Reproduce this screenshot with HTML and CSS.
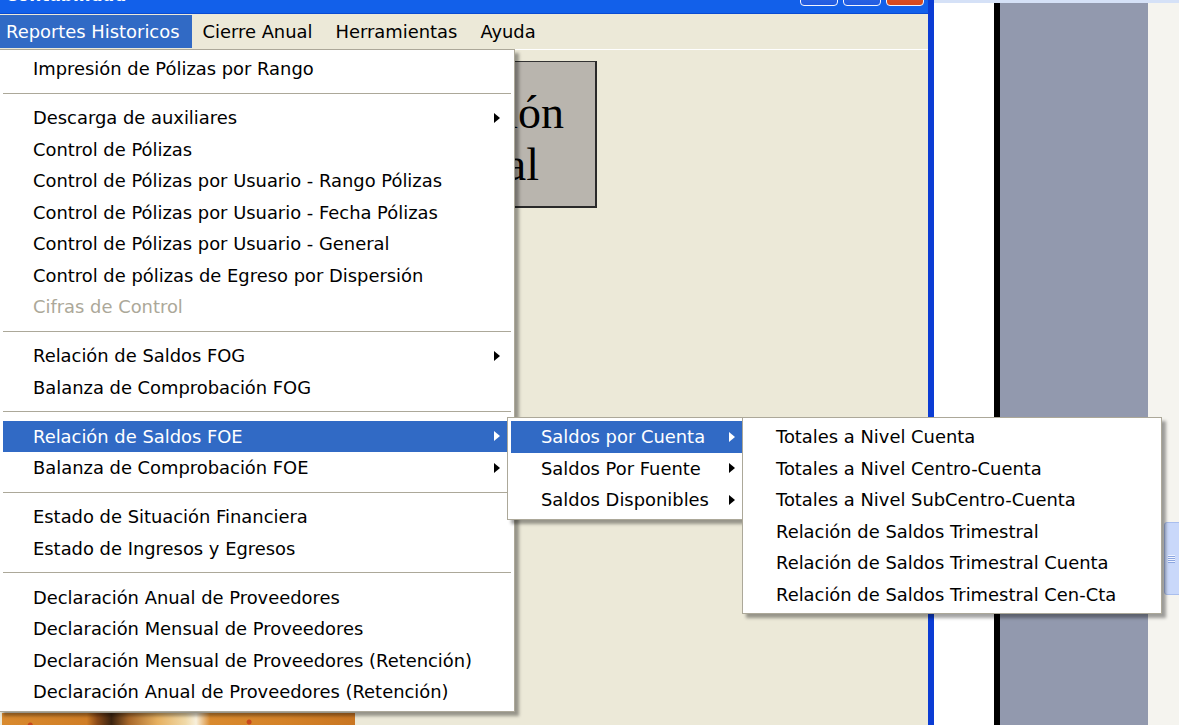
FILE: index.html
```html
<!DOCTYPE html>
<html lang="es">
<head>
<meta charset="utf-8">
<title>Contabilidad</title>
<link rel="stylesheet" href="styles.css">
</head>
<body>
<div class="desktop">
  <div class="window">
    <div class="titlebar">
      <span class="title">Contabilidad</span>
      <div class="caption-buttons">
        <span class="cap-btn"></span>
        <span class="cap-btn"></span>
        <span class="cap-btn close"></span>
      </div>
    </div>
    <div class="menubar">
      <span class="menubar-item active">Reportes Historicos</span>
      <span class="menubar-item">Cierre Anual</span>
      <span class="menubar-item">Herramientas</span>
      <span class="menubar-item">Ayuda</span>
    </div>
    <div class="client">
      <div class="banner">
        <span class="banner-line">Operación</span>
        <span class="banner-line short">Anual</span>
      </div>
      <div class="photo"></div>
    </div>
  </div>
  <div class="backdrop">
    <div class="backdrop-top"></div>
    <div class="backdrop-body">
      <div class="pane-white"></div>
      <div class="pane-rule"></div>
      <div class="pane-gray"></div>
      <div class="scroll-track">
        <div class="scroll-thumb"><span class="grip"></span></div>
      </div>
    </div>
  </div>
</div>

<!-- Reportes Historicos drop-down -->
<div class="popup main-menu">
  <div class="mi">Impresión de Pólizas por Rango</div>
  <div class="sep"></div>
  <div class="mi">Descarga de auxiliares<span class="arrow"></span></div>
  <div class="mi">Control de Pólizas</div>
  <div class="mi">Control de Pólizas por Usuario - Rango Pólizas</div>
  <div class="mi">Control de Pólizas por Usuario - Fecha Pólizas</div>
  <div class="mi">Control de Pólizas por Usuario - General</div>
  <div class="mi">Control de pólizas de Egreso por Dispersión</div>
  <div class="mi disabled">Cifras de Control</div>
  <div class="sep"></div>
  <div class="mi">Relación de Saldos FOG<span class="arrow"></span></div>
  <div class="mi">Balanza de Comprobación FOG</div>
  <div class="sep"></div>
  <div class="mi hot">Relación de Saldos FOE<span class="arrow"></span></div>
  <div class="mi">Balanza de Comprobación FOE<span class="arrow"></span></div>
  <div class="sep"></div>
  <div class="mi">Estado de Situación Financiera</div>
  <div class="mi">Estado de Ingresos y Egresos</div>
  <div class="sep"></div>
  <div class="mi">Declaración Anual de Proveedores</div>
  <div class="mi">Declaración Mensual de Proveedores</div>
  <div class="mi">Declaración Mensual de Proveedores (Retención)</div>
  <div class="mi">Declaración Anual de Proveedores (Retención)</div>
</div>

<!-- Relación de Saldos FOE submenu -->
<div class="popup sub-saldos">
  <div class="mi hot">Saldos por Cuenta<span class="arrow"></span></div>
  <div class="mi">Saldos Por Fuente<span class="arrow"></span></div>
  <div class="mi">Saldos Disponibles<span class="arrow"></span></div>
</div>

<!-- Saldos por Cuenta submenu -->
<div class="popup sub-totales">
  <div class="mi">Totales a Nivel Cuenta</div>
  <div class="mi">Totales a Nivel Centro-Cuenta</div>
  <div class="mi">Totales a Nivel SubCentro-Cuenta</div>
  <div class="mi">Relación de Saldos Trimestral</div>
  <div class="mi">Relación de Saldos Trimestral Cuenta</div>
  <div class="mi">Relación de Saldos Trimestral Cen-Cta</div>
</div>
</body>
</html>
```

FILE: styles.css
```css
* {
  box-sizing: border-box;
}

body {
  margin: 0;
  width: 1179px;
  height: 725px;
  overflow: hidden;
  position: relative;
  background: #ECE9D8;
  font-family: "DejaVu Sans", Verdana, sans-serif;
  font-size: 17.9px;
  color: #000;
}

.desktop {
  display: flex;
  height: 725px;
}

/* ---------- main application window ---------- */
.window {
  width: 934px;
  flex: none;
  display: flex;
  flex-direction: column;
  background: #ECE9D8;
  border-right: 6px solid #0B3CD4;
}

.titlebar {
  height: 14px;
  flex: none;
  display: flex;
  align-items: flex-end;
  overflow: hidden;
  background: #1260EA;
  border-bottom: 1px solid #0A4BD2;
}

.title {
  flex: none;
  margin: 0 0 8px 5px;
  color: #fff;
  font-weight: bold;
  font-size: 17px;
  line-height: 20px;
}

.caption-buttons {
  flex: none;
  display: flex;
  gap: 5px;
  margin: 0 4px 7px auto;
}

.cap-btn {
  width: 38px;
  height: 38px;
  flex: none;
  border: 1px solid #F2F5FF;
  border-radius: 4px;
  background: linear-gradient(#4A86F6, #215BE0);
}

.cap-btn.close {
  background: linear-gradient(#EC7248, #D6471C);
}

.menubar {
  height: 36px;
  flex: none;
  display: flex;
  gap: 4px;
  padding: 1px 0;
  border-bottom: 1px solid #fff;
  background: #ECE9D8;
}

.menubar-item {
  padding: 0 13px 0 6px;
  line-height: 33px;
  white-space: nowrap;
}

.menubar-item.active {
  background: #316AC5;
  color: #fff;
}

.client {
  flex: 1;
  overflow: hidden;
}

/* large caption panel next to the menu */
.banner {
  width: 140px;
  height: 147px;
  margin: 11px 0 0 457px;
  padding: 24.5px 31px 0 0;
  display: flex;
  flex-direction: column;
  align-items: flex-end;
  overflow: hidden;
  background: #B9B5AE;
  border-top: 1px solid #333;
  border-right: 2px solid #2A2A2A;
  border-bottom: 2px solid #2A2A2A;
  font-family: "Liberation Serif", "Times New Roman", serif;
  font-size: 46px;
  line-height: 52px;
  white-space: nowrap;
}

.banner-line.short {
  margin-right: 25px;
}

.photo {
  width: 353px;
  height: 30px;
  margin: 505px 0 0 2px;
  background:
    radial-gradient(circle at 8% 40%, rgba(190, 30, 20, .6) 0 2px, transparent 3px),
    radial-gradient(circle at 22% 70%, rgba(190, 30, 20, .6) 0 2px, transparent 3px),
    radial-gradient(circle at 70% 30%, rgba(190, 30, 20, .6) 0 2px, transparent 3px),
    radial-gradient(circle at 86% 60%, rgba(190, 30, 20, .6) 0 2px, transparent 3px),
    linear-gradient(90deg,
      #D98A2E 0, #D07E26 24%, #8A4A18 27%, #3C2410 31%, #A8682A 36%,
      #E6B060 44%, #F0D9A8 52%, #F8F0DC 55%, #D98A2E 59%, #D48228 80%, #C97622 100%);
}

/* ---------- window behind, on the right ---------- */
.backdrop {
  flex: 1;
  display: flex;
  flex-direction: column;
}

.backdrop-top {
  height: 3px;
  flex: none;
  background: #D5E1F7;
}

.backdrop-body {
  flex: 1;
  display: flex;
}

.pane-white {
  width: 60px;
  flex: none;
  background: #fff;
}

.pane-rule {
  width: 6px;
  flex: none;
  background: #000;
}

.pane-gray {
  width: 148px;
  flex: none;
  background: #9299AE;
}

.scroll-track {
  flex: 1;
  background: #F5F4EF;
}

.scroll-thumb {
  width: 24px;
  height: 73px;
  margin: 519px 0 0 16px;
  display: flex;
  align-items: center;
  padding-left: 3px;
  border: 1px solid #A9BEEE;
  border-radius: 3px;
  background: #C9D8FA;
}

.grip {
  width: 7px;
  height: 8px;
  background: repeating-linear-gradient(#EEF3FF 0 1px, #8CA6E0 1px 2px);
}

/* ---------- pop-up menus ---------- */
.popup {
  position: absolute;
  padding: 3px;
  background: #fff;
  border: 1px solid #ACA899;
  box-shadow: 4px 4px 3px rgba(0, 0, 0, .36);
}

.main-menu {
  left: -1px;
  top: 49px;
  width: 516px;
  z-index: 1;
}

.sub-saldos {
  left: 507px;
  top: 417px;
  width: 243px;
  z-index: 2;
}

.sub-totales {
  left: 742px;
  top: 417px;
  width: 420px;
  z-index: 3;
}

.mi {
  height: 31.5px;
  display: flex;
  align-items: center;
  justify-content: space-between;
  padding: 0 11px 0 30px;
  white-space: nowrap;
}

.mi.hot {
  background: #316AC5;
  color: #fff;
}

.mi.disabled {
  color: #ACA899;
}

.arrow {
  width: 0;
  height: 0;
  flex: none;
  border-left: 6px solid currentColor;
  border-top: 5px solid transparent;
  border-bottom: 5px solid transparent;
}

.sep {
  height: 1px;
  margin: 8px 0 8.5px;
  background: #ACA899;
}
```
